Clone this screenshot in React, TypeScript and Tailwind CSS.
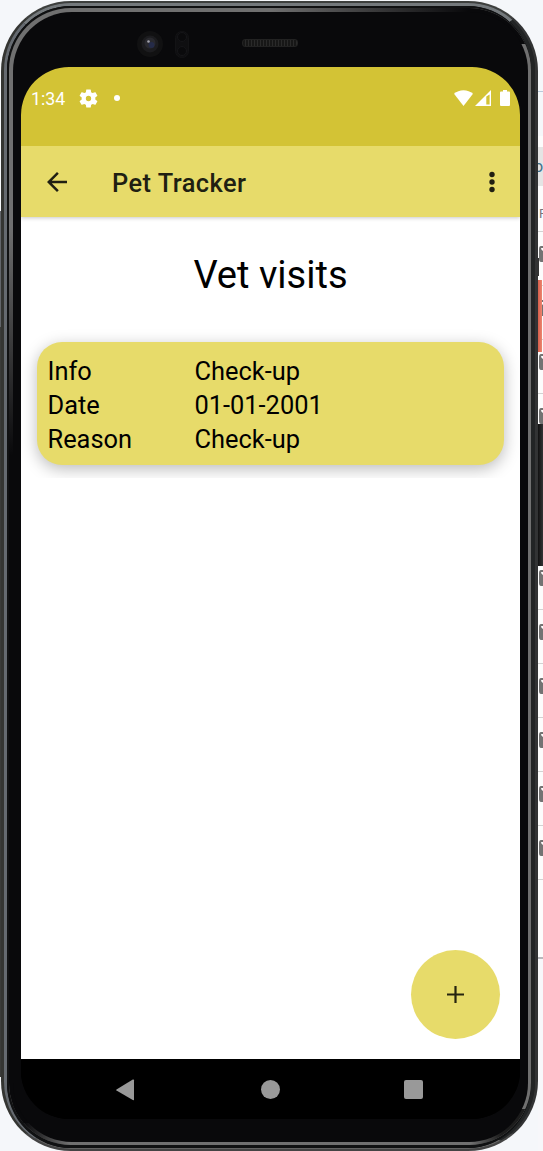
import React from "react";

const visit = [
  { label: "Info", value: "Check-up" },
  { label: "Date", value: "01-01-2001" },
  { label: "Reason", value: "Check-up" },
];

function StatusBar() {
  return (
    <div className="relative z-20 h-[79px] shrink-0 bg-[#d3c335] pl-[10px] pr-[10px] pt-[20px] text-white">
      <div className="flex h-[24px] items-center">
        <span className="w-[48px] text-[17.8px] leading-[24px]">1:34</span>
        <svg className="-mt-[2px] size-[19px]" viewBox="2 2 20 20" fill="currentColor">
          <path d="M19.14 12.94c.04-.3.06-.61.06-.94 0-.32-.02-.64-.07-.94l2.03-1.58a.49.49 0 0 0 .12-.61l-1.92-3.32a.488.488 0 0 0-.59-.22l-2.39.96c-.5-.38-1.03-.7-1.62-.94l-.36-2.54a.484.484 0 0 0-.48-.41h-3.84c-.24 0-.43.17-.47.41l-.36 2.54c-.59.24-1.13.57-1.62.94l-2.39-.96c-.22-.08-.47 0-.59.22L2.74 8.87c-.12.21-.08.47.12.61l2.03 1.58c-.05.3-.09.63-.09.94s.02.64.07.94l-2.03 1.58a.49.49 0 0 0-.12.61l1.92 3.32c.12.22.37.29.59.22l2.39-.96c.5.38 1.03.7 1.62.94l.36 2.54c.05.24.24.41.48.41h3.84c.24 0 .44-.17.47-.41l.36-2.54c.59-.24 1.13-.56 1.62-.94l2.39.96c.22.08.47 0 .59-.22l1.92-3.32c.12-.22.07-.47-.12-.61l-2.01-1.58zM12 14.8a2.8 2.8 0 1 1 0-5.6 2.8 2.8 0 0 1 0 5.6z" />
        </svg>
        <span className="-mt-[2px] ml-[16px] size-[6px] rounded-full bg-white" />
        <svg className="-mt-[2px] ml-auto h-[16px] w-[19px]" viewBox="0 0 19 16" fill="currentColor">
          <path d="M9.5 16 0 3.8C5-.9 14-.9 19 3.8z" />
        </svg>
        <svg className="-mt-[2px] ml-[2px] size-[16px]" viewBox="0 0 16 16" fill="currentColor">
          <path fillRule="evenodd" d="M0 16 16 0v16zM11.3 6.4V14.6H14.6V4.6z" />
        </svg>
        <svg className="-mt-[2px] ml-[9px] h-[16px] w-[10px]" viewBox="0 0 10 16" fill="currentColor">
          <path d="M3 0h4v1.5h2a1 1 0 0 1 1 1V15a1 1 0 0 1-1 1H1a1 1 0 0 1-1-1V2.500a1 1 0 0 1 1-1h2z" />
        </svg>
      </div>
    </div>
  );
}

function AppBar() {
  return (
    <header className="relative z-10 flex h-[71px] shrink-0 items-center bg-[#e7db6a] pl-[21px] pr-[13px] text-[#201f12] shadow-[0_1px_4px_rgba(0,0,0,0.22)]">
      <svg className="size-[30px]" viewBox="0 0 24 24" fill="currentColor">
        <path d="M20 11H7.830l5.590-5.590L12 4l-8 8 8 8 1.410-1.410L7.830 13H20v-2z" />
      </svg>
      <h1 className="ml-[40px] pt-[2px] text-[25.4px] font-medium leading-[32px] tracking-[0.46px]">Pet Tracker</h1>
      <svg className="ml-auto size-[30px]" viewBox="0 0 24 24" fill="currentColor">
        <circle cx="12" cy="6" r="2.150" />
        <circle cx="12" cy="12" r="2.150" />
        <circle cx="12" cy="18" r="2.150" />
      </svg>
    </header>
  );
}

function VisitCard() {
  return (
    <div className="rounded-[25px] bg-[#e7db6a] pb-[9px] pl-[10.5px] pt-[12px] shadow-[0_4px_16px_rgba(0,0,0,0.27)]">
      {visit.map((row) => (
        <div key={row.label} className="grid grid-cols-[147px_1fr] text-[25.4px] leading-[34px] text-black">
          <span>{row.label}</span>
          <span>{row.value}</span>
        </div>
      ))}
    </div>
  );
}

function NavBar() {
  return (
    <nav className="flex h-[60px] shrink-0 items-center bg-black pl-[94px] pt-px text-[#999]">
      <svg className="h-[22px] w-[20px]" viewBox="0 0 20 22" fill="currentColor">
        <path d="M17.800.600Q19 0 19 1.300v19.200q0 1.200-1.200.6L1.500 11.600q-.8-.6 0-1.200z" />
      </svg>
      <span className="ml-[126px] size-[19px] rounded-full bg-[#999]" />
      <span className="ml-[124px] size-[19px] rounded-[2px] bg-[#999]" />
    </nav>
  );
}

function Screen() {
  return (
    <div className="flex h-[1052px] w-[499px] flex-col overflow-hidden rounded-[48px] bg-black">
      <StatusBar />
      <AppBar />
      <main className="flex flex-1 flex-col bg-white">
        <h2 className="pt-[34px] text-center text-[38.1px] leading-[48px] text-black">Vet visits</h2>
        <div className="overflow-hidden px-[16px] pb-[13px] pt-[43px]">
          <VisitCard />
        </div>
        <button className="mb-[20.5px] ml-auto mr-[20.5px] mt-auto flex size-[89px] items-center justify-center rounded-full bg-[#e7db6a] text-[#26240f]">
          <svg className="size-[17px]" viewBox="0 0 17 17" stroke="currentColor" strokeWidth="2.200">
            <path d="M8.500 0v17M0 8.500h17" />
          </svg>
        </button>
      </main>
      <NavBar />
    </div>
  );
}

function TopBezel() {
  return (
    <div className="flex h-[55px] shrink-0 items-start pl-[124px] pt-[19px]">
      <svg className="h-[28px] w-[26px]" viewBox="0 0 26 28">
        <circle cx="13" cy="13" r="13" fill="#111112" />
        <circle cx="13" cy="13" r="8.500" fill="#1c1c1f" />
        <circle cx="13" cy="12" r="5.500" fill="#29292e" />
        <circle cx="14.500" cy="14" r="3" fill="#252b48" />
        <circle cx="11.500" cy="10.500" r="1.300" fill="#a2a2ad" />
      </svg>
      <svg className="ml-[12px] h-[28px] w-[14px]" viewBox="0 0 14 28">
        <rect x=".5" y=".5" width="13" height="26" rx="6" fill="#0f0f11" stroke="#131315" />
        <circle cx="7" cy="6" r="4.500" fill="#0a0a0c" stroke="#151518" />
        <circle cx="7" cy="20" r="4.500" fill="#0a0a0c" stroke="#151518" />
      </svg>
      <span className="ml-[53px] mt-[8px] h-[8px] w-[56px] rounded-[3px] border border-[#222] bg-[repeating-linear-gradient(90deg,#171717_0_2px,#2a2a2a_2px_3px)]" />
    </div>
  );
}

function Phone() {
  return (
    <div className="ml-px mt-px h-[1150px] w-[537px] shrink-0 rounded-[70px] border-b-2 border-l-[3px] border-r-[3px] border-t-2 border-b-[#444] border-l-[#343532] border-r-[#323334] border-t-[#3d3f3d] bg-[#222425]">
      <div className="h-full rounded-[67px] border-b border-l-[3px] border-r-[4px] border-t-[3px] border-b-[#626262] border-l-[#656a70] border-r-[#222425] border-t-[#74797c] bg-[#09090b]">
        <div className="h-full rounded-[64px] border-b-[3px] border-l-2 border-t-2 border-[#101112] bg-[#101112]">
          <div className="relative h-full overflow-hidden rounded-[62px] bg-[#707070] pb-[3px] pl-[4px] pr-[3px] pt-[4px]">
            <span className="absolute left-0 top-[200px] h-[915px] w-[20px] bg-linear-to-b from-transparent from-2% via-[#09090b] via-27% to-[#09090b]" />
            <span className="absolute bottom-0 left-0 h-[40px] w-[60px] bg-linear-to-r from-[#09090b] from-25% to-transparent" />
            <span className="absolute left-0 top-0 h-[36px] w-full bg-linear-to-r from-transparent from-50% via-[#09090b] via-88% to-[#09090b]" />
            <span className="absolute bottom-0 right-0 h-[36px] w-[60px] bg-linear-to-l from-[#1c1c1c] from-50% to-transparent" />
            <div className="relative flex h-full flex-col rounded-[59px] bg-[#09090b]">
              <TopBezel />
              <div className="pl-[8px]">
                <Screen />
              </div>
            </div>
          </div>
        </div>
      </div>
    </div>
  );
}

const rows = [true, true, true, true, false, false, true, true, true, true, true, true];

function BackgroundWindow() {
  return (
    <aside className="flex w-[5px] shrink-0 flex-col overflow-hidden bg-[#fcfcfc]">
      <div className="h-[92px] border-b border-[#b9c9da] bg-[#f5f7fa]" />
      <div className="h-[44px] bg-[#f5f7fa]" />
      <div className="mt-[11px] flex h-[39px] items-center justify-end bg-[#e4e4e4] text-[16px] text-[#40718b]">o</div>
      <div className="h-[45px] pl-px pt-[20px] text-[13px] leading-[16px] text-[#77747c]">F</div>
      {rows.map((icon, i) => (
        <div key={i} className="h-[54px] shrink-0 border-t border-[#d2d2d2] pl-px pt-[14px]">
          {icon && (
            <svg className="h-[16px] w-[4px]" viewBox="0 0 4 16">
              <path d="M4 0H2Q0 0 0 3v10q0 3 2 3h2z" fill="#737373" />
              <path d="M2 2h2v3Q2 4 2 2" fill="#fff" />
            </svg>
          )}
        </div>
      ))}
      <div className="h-[80px] shrink-0 border-b-2 border-t border-b-[#b8b8bc] border-t-[#d2d2d2]" />
      <div className="flex-1 bg-[#f7f7fa]" />
    </aside>
  );
}

export default function App() {
  return (
    <div className="relative flex h-[1151px] w-[543px] overflow-hidden bg-[#f5f7fa] font-['Roboto',sans-serif]">
      <Phone />
      <BackgroundWindow />
      <span className="absolute left-[538px] top-[280px] h-[72px] w-[4px] bg-linear-to-r from-[#d65f4b] to-[#ed8671]" />
      <span className="absolute left-[538px] top-[424px] h-[142px] w-[5px] bg-linear-to-r from-[#111] to-[#333436]" />
      <span className="absolute left-[538px] top-[258px] h-[18px] w-px bg-[#333]" />
      <span className="absolute left-0 top-[211px] h-[116px] w-px bg-[#62656a]" />
      <span className="absolute left-0 top-[327px] h-[750px] w-px bg-[#3a3b39]" />
    </div>
  );
}
